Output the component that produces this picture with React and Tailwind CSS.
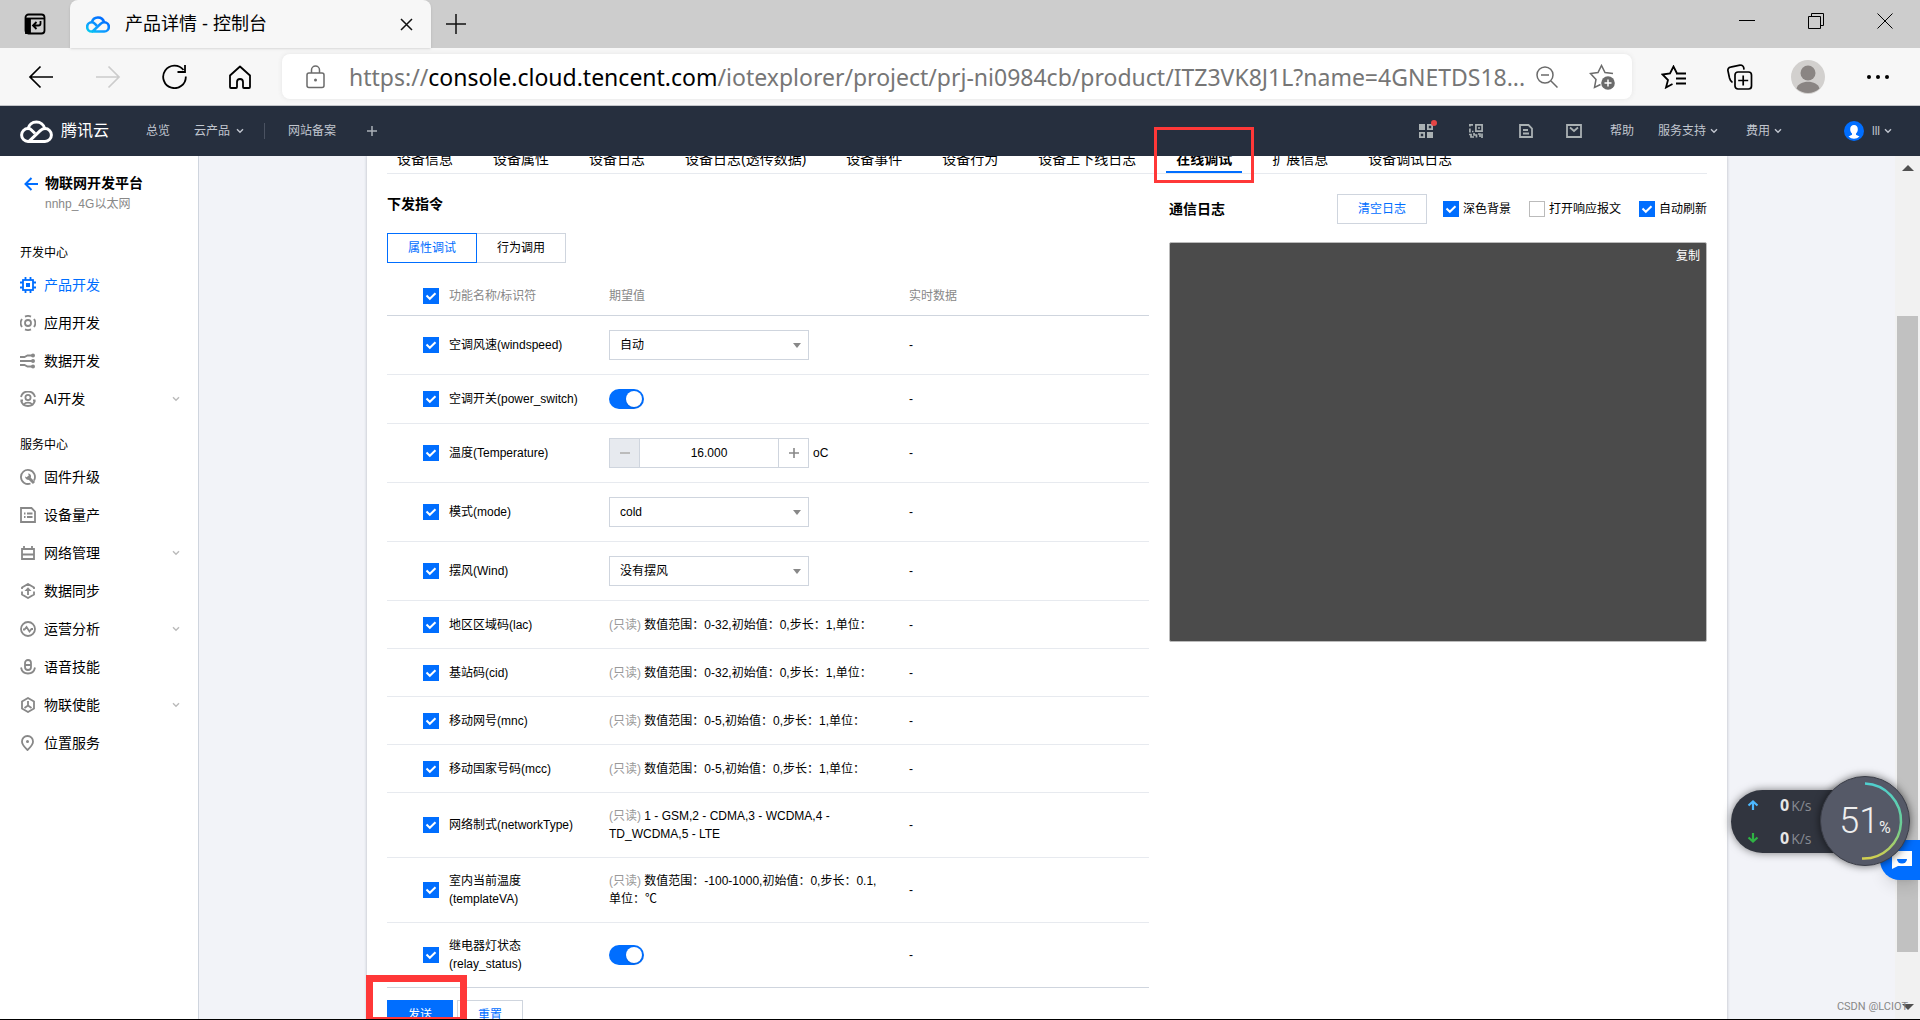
import { useState } from 'react';

const menuDev = [
  { icon: 'chip', label: '产品开发', active: true },
  { icon: 'app', label: '应用开发' },
  { icon: 'data', label: '数据开发' },
  { icon: 'ai', label: 'AI开发', more: true },
];

const menuService = [
  { icon: 'firmware', label: '固件升级' },
  { icon: 'batch', label: '设备量产' },
  { icon: 'network', label: '网络管理', more: true },
  { icon: 'sync', label: '数据同步' },
  { icon: 'analysis', label: '运营分析', more: true },
  { icon: 'voice', label: '语音技能' },
  { icon: 'enable', label: '物联使能', more: true },
  { icon: 'location', label: '位置服务' },
];

const tabs = [
  '设备信息',
  '设备属性',
  '设备日志',
  '设备日志(透传数据)',
  '设备事件',
  '设备行为',
  '设备上下线日志',
  '在线调试',
  '扩展信息',
  '设备调试日志',
];

const rows = [
  { id: 'windspeed', name: '空调风速(windspeed)', type: 'select', options: ['自动', '低速', '高速'] },
  { id: 'power_switch', name: '空调开关(power_switch)', type: 'switch' },
  { id: 'Temperature', name: '温度(Temperature)', type: 'number', unit: 'oC' },
  { id: 'mode', name: '模式(mode)', type: 'select', options: ['cold', 'hot'] },
  { id: 'Wind', name: '摆风(Wind)', type: 'select', options: ['没有摆风', '摆风'] },
  { id: 'lac', name: '地区区域码(lac)', type: 'text', text: '数值范围：0-32,初始值：0,步长：1,单位：' },
  { id: 'cid', name: '基站码(cid)', type: 'text', text: '数值范围：0-32,初始值：0,步长：1,单位：' },
  { id: 'mnc', name: '移动网号(mnc)', type: 'text', text: '数值范围：0-5,初始值：0,步长：1,单位：' },
  { id: 'mcc', name: '移动国家号码(mcc)', type: 'text', text: '数值范围：0-5,初始值：0,步长：1,单位：' },
  { id: 'networkType', name: '网络制式(networkType)', type: 'text', tall: true, text: '1 - GSM,2 - CDMA,3 - WCDMA,4 - TD_WCDMA,5 - LTE' },
  { id: 'templateVA', name: '室内当前温度(templateVA)', type: 'text', tall: true, text: '数值范围：-100-1000,初始值：0,步长：0.1,单位：℃' },
  { id: 'relay_status', name: '继电器灯状态(relay_status)', type: 'switch', tall: true },
];

const rowHeight = (row) => {
  if (row.tall) return 'h-[65px]';
  if (row.type === 'switch') return 'h-[49px]';
  if (row.type === 'text') return 'h-12';
  return 'h-[59px]';
};

const MenuIcon = ({ name }) => {
  const shapes = {
    chip: (
      <>
        <rect x="3" y="3" width="10" height="10" />
        <rect x="6" y="6" width="4" height="4" fill="currentColor" stroke="none" />
        <path d="M5.5 0v3M10.5 0v3M5.5 13v3M10.5 13v3M0 5.5h3M0 10.5h3M13 5.5h3M13 10.5h3" />
      </>
    ),
    app: (
      <>
        <circle cx="8" cy="8" r="3" />
        <path d="M5 1.6a7 7 0 0 1 6 0M5 14.4a7 7 0 0 0 6 0M2 4a7 7 0 0 0 0 8M14 4a7 7 0 0 1 0 8" />
      </>
    ),
    data: (
      <>
        <path d="M0 4h4.500l3-1.500H13M0 8h13M0 12h4.500l3 1.500H13" />
        <g fill="currentColor" stroke="none">
          <circle cx="13" cy="2.500" r="2" />
          <circle cx="13" cy="8" r="2" />
          <circle cx="13" cy="13.500" r="2" />
        </g>
      </>
    ),
    ai: (
      <>
        <circle cx="8" cy="6.500" r="2.600" />
        <path d="M1 6a7.200 7.200 0 0 1 14 0M1 9.500a7.200 7.200 0 0 0 14 0M0.500 9.500H3M13 9.500h2.500M4 13.500c1.500-2.500 6.500-2.500 8 0" />
      </>
    ),
    firmware: (
      <>
        <path d="M10.500 14.500a7 7 0 1 1 3.500-3" />
        <path d="M7.500 7.500l6.500 6.500" strokeWidth="3" />
        <path d="M5 7.500A3.200 3.200 0 0 0 9.500 10.500L11 8A3.200 3.200 0 0 0 8 4.500L9 7 7.500 8.500z" fill="currentColor" stroke="none" />
      </>
    ),
    batch: (
      <>
        <path d="M1 1h10.500L15 4.500V15H1z" />
        <path d="M4 6.500h1.500M7 6.500h5.500M4 10h1.500M7 10h5.500" />
      </>
    ),
    network: <path d="M2 4h12v10H2zM2 9.500h12M4 1v3M12 1v3" />,
    sync: (
      <>
        <path d="M2 6V4.500L8 1l6 3.500V6M2 8.500v3L8 15l6-3.500v-3M8 12V6" />
        <path d="M4.500 8L8 4.200 11.500 8z" fill="currentColor" stroke="none" />
      </>
    ),
    analysis: (
      <>
        <circle cx="8" cy="8" r="7" />
        <path d="M3 8.500h1.500L6.500 6l3 4.500L11.500 8H13" />
      </>
    ),
    voice: (
      <>
        <rect x="5" y="1" width="6" height="10" rx="3" />
        <path d="M5 6h6M1 8.500c1.500 8 12.500 8 14 0" />
      </>
    ),
    enable: (
      <>
        <path d="M8 1l6 3.500v7L8 15l-6-3.500v-7z" />
        <path d="M8 4v4.500M8 8.500L4.500 11M8 8.500l3.500 2.500" />
      </>
    ),
    location: (
      <>
        <path d="M7.500 1a5.500 5.500 0 0 0-5.500 5.800C2 10 5 12.500 7.500 15 10 12.500 13 10 13 6.800A5.500 5.500 0 0 0 7.500 1z" />
        <circle cx="7.500" cy="6.500" r="1.500" fill="currentColor" stroke="none" />
      </>
    ),
  };

  return (
    <svg className="w-4 h-4 shrink-0" viewBox="0 0 16 16" fill="none" stroke="currentColor" strokeWidth="1.8">
      {shapes[name]}
    </svg>
  );
};

const Chevron = ({ className }) => (
  <svg className={className} viewBox="0 0 8 6" fill="none" stroke="currentColor" strokeWidth="1.4">
    <path d="M1 1.200l3 3 3-3" />
  </svg>
);

const CloudLogo = ({ className, stroke, width = 3 }) => (
  <svg className={className} viewBox="0 0 33 24" fill="none" stroke={stroke} strokeWidth={width} strokeLinejoin="round">
    <defs>
      <linearGradient id="cloud" x1="0" y1="24" x2="14" y2="0" gradientUnits="userSpaceOnUse">
        <stop offset="0" stopColor="#00d8e8" />
        <stop offset="0.400" stopColor="#0fa4ff" />
        <stop offset="1" stopColor="#006eff" />
      </linearGradient>
    </defs>
    <path d="M8 22.400h17a6.300 6.300 0 0 0 0-12.800c-2 0-3.500.8-5 2.200L9 22.400" />
    <path d="M15 14.500l-3-3C10.800 10.200 9.500 9.600 8 9.600a6.400 6.400 0 0 0 0 12.800h1.500" />
    <path d="M8 9.800a8.600 8.600 0 0 1 16.800-.1" />
  </svg>
);

const Checkbox = ({ id, label, defaultChecked = true }) => (
  <span className="relative block w-4 h-4 shrink-0">
    <input
      id={id}
      type="checkbox"
      aria-label={label}
      defaultChecked={defaultChecked}
      className="peer block w-4 h-4 appearance-none border border-[#bbb] bg-white checked:border-[#006eff] checked:bg-[#006eff]"
    />
    <svg
      className="absolute inset-0 w-4 h-4 pointer-events-none opacity-0 peer-checked:opacity-100"
      viewBox="0 0 16 16"
      fill="none"
      stroke="#fff"
      strokeWidth="2"
    >
      <path d="M3.500 7.500l3.300 3.300 5.700-5.600" />
    </svg>
  </span>
);

const Switch = ({ label }) => (
  <span className="relative block w-[35px] h-5">
    <input
      type="checkbox"
      role="switch"
      aria-label={label}
      defaultChecked
      className="peer block w-[35px] h-5 appearance-none rounded-full bg-[#bbb] checked:bg-[#006eff]"
    />
    <span className="absolute top-0.5 left-0.5 w-4 h-4 rounded-full bg-white shadow pointer-events-none peer-checked:left-[17px]" />
  </span>
);

const ValueCell = ({ row }) => {
  const [value, setValue] = useState('16.000');
  const step = (delta) => setValue((Number(value) + delta).toFixed(3));

  if (row.type === 'select') {
    return (
      <div className="relative w-[200px]">
        <select
          aria-label={row.name}
          className="block w-full h-[30px] appearance-none border border-[#cfd5de] bg-white px-2.5 text-xs text-black"
        >
          {row.options.map((option) => (
            <option key={option}>{option}</option>
          ))}
        </select>
        <svg className="absolute right-2 top-3 w-2 h-2 pointer-events-none" viewBox="0 0 8 8" fill="#888">
          <path d="M0 1h8L4 6z" />
        </svg>
      </div>
    );
  }
  if (row.type === 'switch') {
    return <Switch label={row.name} />;
  }
  if (row.type === 'number') {
    return (
      <div className="flex items-center gap-1">
        <div className="flex w-[200px] h-[30px] border border-[#cfd5de]">
          <button
            type="button"
            aria-label="减少"
            onClick={() => step(-1)}
            className="flex items-center justify-center w-[30px] border-r border-[#cfd5de] bg-[#e7eaef]"
          >
            <span className="w-2.5 h-0.5 bg-[#bbb]" />
          </button>
          <input
            aria-label={row.name}
            value={value}
            onChange={(e) => setValue(e.target.value)}
            className="flex-1 min-w-0 text-center text-xs"
          />
          <button
            type="button"
            aria-label="增加"
            onClick={() => step(1)}
            className="flex items-center justify-center w-[30px] border-l border-[#cfd5de]"
          >
            <svg className="w-2.5 h-2.5" viewBox="0 0 10 10" stroke="#888" strokeWidth="1.600">
              <path d="M5 0v10M0 5h10" />
            </svg>
          </button>
        </div>
        <span>{row.unit}</span>
      </div>
    );
  }
  return (
    <div>
      <span className="text-[#999]">(只读)</span> {row.text}
    </div>
  );
};

const BrowserBar = () => (
  <div className="shrink-0 bg-[#f7f7f7] border-b border-[#c3c5c9]">
    {/* Tab strip */}
    <div className="flex h-12 bg-[#cdcdcd]">
      <button type="button" aria-label="标签页操作" className="flex items-center justify-center w-[70px]">
        <svg className="w-[22px] h-[22px]" viewBox="0 0 22 22" fill="none" stroke="#000" strokeWidth="1.800">
          <rect x="1.500" y="1.500" width="19" height="19" rx="3" />
          <path d="M2 5.500h18" />
          <path d="M2 6h4v14H2z" fill="#000" />
          <path d="M16.500 8v2.500a2 2 0 0 1-2 2H9.500M12.500 9l-3.500 3.500 3.500 3.500" />
        </svg>
      </button>
      <div className="flex items-center w-[361px] rounded-t-lg bg-[#f7f7f7] pl-4 pr-[18px] shadow-sm">
        <CloudLogo className="w-6 h-[18px]" stroke="url(#cloud)" width={3.6} />
        <span className="ml-[15px] flex-1 text-lg leading-6 text-black">产品详情 - 控制台</span>
        <button type="button" aria-label="关闭标签页">
          <svg className="w-[13px] h-[13px]" viewBox="0 0 13 13" stroke="#111" strokeWidth="1.500">
            <path d="M1 1l11 11M12 1L1 12" />
          </svg>
        </button>
      </div>
      <button type="button" aria-label="新标签页" className="ml-[15px]">
        <svg className="w-5 h-5" viewBox="0 0 20 20" stroke="#111" strokeWidth="1.500">
          <path d="M10 0v20M0 10h20" />
        </svg>
      </button>
      <div className="ml-auto flex items-center gap-[53px] pr-[27px] pb-1.5">
        <button type="button" aria-label="最小化">
          <svg className="w-4 h-4" viewBox="0 0 16 16" stroke="#000">
            <path d="M0 7.500h16" />
          </svg>
        </button>
        <button type="button" aria-label="还原">
          <svg className="w-4 h-4" viewBox="0 0 16 16" fill="none" stroke="#000">
            <path d="M.5 3.500h12v12H.5zM3.500 3.500v-3h12v12h-3" />
          </svg>
        </button>
        <button type="button" aria-label="关闭">
          <svg className="w-4 h-4" viewBox="0 0 16 16" stroke="#000">
            <path d="M.5.5l15 15M15.500.5l-15 15" />
          </svg>
        </button>
      </div>
    </div>

    {/* Toolbar */}
    <div className="flex items-center h-[57px] pl-7 pr-[31px]">
      <div className="flex items-center gap-[41px]">
        <button type="button" aria-label="后退">
          <svg className="w-[26px] h-6" viewBox="0 0 26 24" fill="none" stroke="#000" strokeWidth="1.700">
            <path d="M12.500 1.500L2 12l10.500 10.500M2 12h23" />
          </svg>
        </button>
        <button type="button" aria-label="前进">
          <svg className="w-[26px] h-6" viewBox="0 0 26 24" fill="none" stroke="#ccc" strokeWidth="1.700">
            <path d="M13.500 1.500L24 12 13.500 22.500M24 12H1" />
          </svg>
        </button>
        <button type="button" aria-label="刷新">
          <svg className="w-[25px] h-[25px]" viewBox="0 0 25 25" fill="none" stroke="#000" strokeWidth="1.800">
            <path d="M21.500 6A11.300 11.300 0 1 0 23.800 12.500M23 1v7h-7.500" />
          </svg>
        </button>
        <button type="button" aria-label="主页">
          <svg className="w-6 h-6" viewBox="0 0 24 24" fill="none" stroke="#000" strokeWidth="1.800" strokeLinejoin="round">
            <path d="M12 1.500L2 10.500V22a1 1 0 0 0 1 1h5a1 1 0 0 0 1-1v-5a3 3 0 0 1 6 0v5a1 1 0 0 0 1 1h5a1 1 0 0 0 1-1V10.500z" />
          </svg>
        </button>
      </div>
      <div className="ml-[30px] flex flex-1 min-w-0 items-center h-[45px] rounded-lg bg-white pl-6 pr-[17px] shadow-[0_0_5px_#e4e4e4]">
        <svg className="w-[19px] h-6 shrink-0" viewBox="0 0 19 24" fill="none" stroke="#6b6b6b" strokeWidth="1.500">
          <rect x="1" y="8" width="17" height="14.500" rx="2" />
          <path d="M5.500 8V5a4 4 0 0 1 8 0v3" />
          <circle cx="9.500" cy="15" r="1.500" fill="#6b6b6b" stroke="none" />
        </svg>
        <div
          role="textbox"
          aria-label="地址栏"
          className="ml-6 flex-1 min-w-0 whitespace-nowrap overflow-hidden font-['Noto_Sans','Noto_Sans_CJK_SC',sans-serif] text-[23px] leading-8 text-[#767676]"
        >
          https://<span className="text-black">console.cloud.tencent.com</span>
          /iotexplorer/project/prj-ni0984cb/product/ITZ3VK8J1L?name=4GNETDS18...
        </div>
        <button type="button" aria-label="缩小">
          <svg className="w-[22px] h-[22px]" viewBox="0 0 22 22" fill="none" stroke="#6b6b6b" strokeWidth="1.500">
            <circle cx="9" cy="9" r="8" />
            <path d="M5 9h8M15 15l6.500 6.500" />
          </svg>
        </button>
        <button type="button" aria-label="添加到收藏夹" className="ml-[31px]">
          <svg className="w-[26px] h-[26px]" viewBox="0 0 26 26" fill="none" stroke="#6b6b6b" strokeWidth="1.500">
            <path d="M24 9.500l-8-1L12.500 1.500 9 8.500l-7.500 1L7 15.500 5.500 23.500l6-3" />
            <circle cx="19" cy="19" r="6.800" fill="#6b6b6b" stroke="none" />
            <path d="M19 15.500v7M15.500 19h7" stroke="#fff" />
          </svg>
        </button>
      </div>
      <button type="button" aria-label="收藏夹" className="ml-[29px]">
        <svg className="w-[26px] h-6" viewBox="0 0 26 24" fill="none" stroke="#000" strokeWidth="1.800">
          <path d="M18 8.500h-2L12.500 1.500 9 8.500l-7.500 1L7 15 5 22.500l6.500-3.500M15 8.500h10M15 13.500h10M15 18.500h10" />
        </svg>
      </button>
      <button type="button" aria-label="集锦" className="ml-10">
        <svg className="w-[26px] h-[26px]" viewBox="0 0 26 26" fill="none" stroke="#000" strokeWidth="1.700">
          <path d="M5.500 18.500C3.500 17.500 3 16 2.500 14L1 7a3 3 0 0 1 2.500-3.800L13 1.200a3 3 0 0 1 3.700 2.500l.3 2" />
          <rect x="8" y="8" width="16.500" height="17" rx="3" />
          <path d="M16.200 11.500v10M11.200 16.500h10" />
        </svg>
      </button>
      <button type="button" aria-label="个人资料" className="ml-[38px]">
        <svg className="w-[34px] h-[34px]" viewBox="0 0 34 34">
          <circle cx="17" cy="17" r="17" fill="#d2d0ce" />
          <circle cx="17" cy="13" r="7.500" fill="#8a8583" />
          <path d="M5.500 28.500c2-9 21-9 23 0a17 17 0 0 1-23 0z" fill="#8a8583" />
        </svg>
      </button>
      <button type="button" aria-label="更多" className="ml-[42px]">
        <svg className="w-[22px] h-4" viewBox="0 0 22 16">
          <circle cx="2" cy="8" r="2" />
          <circle cx="11" cy="8" r="2" />
          <circle cx="20" cy="8" r="2" />
        </svg>
      </button>
    </div>
  </div>
);

const ConsoleHeader = () => (
  <header className="flex items-center shrink-0 h-[50px] bg-[#262f3e] pl-5 pr-7 text-xs leading-5 text-[#c1c6cf]">
    <CloudLogo className="w-[33px] h-6" stroke="#fff" />
    <span className="ml-2 text-base leading-6 text-white">腾讯云</span>
    <a href="#" className="ml-[37px]">总览</a>
    <a href="#" className="ml-6 flex items-center">
      云产品
      <Chevron className="ml-1.5 w-2 h-1.5" />
    </a>
    <span className="ml-5 w-px h-4 bg-[#4a5261]" />
    <a href="#" className="ml-[23px]">网站备案</a>
    <button type="button" aria-label="添加" className="ml-[31px]">
      <svg className="w-2.5 h-2.5" viewBox="0 0 10 10" stroke="#aab1b8" strokeWidth="1.500">
        <path d="M5 0v10M0 5h10" />
      </svg>
    </button>

    <div className="ml-auto flex items-center">
      <a href="#" aria-label="控制台" className="relative">
        <svg className="w-3.5 h-3.5" viewBox="0 0 14 14" fill="none" stroke="#aab1b3" strokeWidth="1.800">
          <path d="M0 0h6v6H0zM8 8h6v6H8z" fill="#aab1b3" stroke="none" />
          <path d="M8.900.9h4.200v4.200H8.900zM.9 8.900h4.200v4.200H.9z" />
        </svg>
        <span className="absolute -top-1 -right-1 w-1.5 h-1.5 rounded-full bg-[#e54545]" />
      </a>
      <a href="#" aria-label="小程序" className="ml-9">
        <svg className="w-3.5 h-3.5" viewBox="0 0 14 14" fill="none" stroke="#aab1b3" strokeWidth="1.700">
          <path d="M4 .9H.9v1.600M.9 4.500v4M3 7.500h1.500M6.900.9h6.200v6.200H6.900zM9 4h2M0 10.500h2v2.500h3M5 9v2h2.500v2.500M9 10h2v3M13 9.500V14" />
        </svg>
      </a>
      <a href="#" aria-label="文档" className="ml-9">
        <svg className="w-3.5 h-3.5" viewBox="0 0 14 14" fill="none" stroke="#aab1b3" strokeWidth="1.800">
          <path d="M1 1h8.500L13 4.500V13H1zM4 6h5M4 9.500h6" />
        </svg>
      </a>
      <a href="#" aria-label="消息" className="ml-[33px]">
        <svg className="w-4 h-3.5" viewBox="0 0 16 14" fill="none" stroke="#aab1b3" strokeWidth="1.800">
          <path d="M1 1h14v12H1zM4 3.500l4 3.500 4-3.500" />
        </svg>
      </a>
      <a href="#" className="ml-7">帮助</a>
      <a href="#" className="ml-6 flex items-center">
        服务支持
        <Chevron className="ml-1 w-2 h-1.5" />
      </a>
      <a href="#" className="ml-7 flex items-center">
        费用
        <Chevron className="ml-1 w-2 h-1.5" />
      </a>
      <a href="#" className="ml-[62px] flex items-center">
        <svg className="w-5 h-5" viewBox="0 0 20 20">
          <circle cx="10" cy="10" r="10" fill="#006eff" />
          <path d="M10 4c2.500 0 3.800 1.800 3.800 4.200 0 2-.8 3.500-1.800 4.300v1.300l3.500 1.700a8 8 0 0 1-11 0L8 13.800v-1.300c-1-.8-1.800-2.300-1.800-4.300C6.200 5.800 7.500 4 10 4z" fill="#fff" />
        </svg>
        <span className="ml-2">lll</span>
        <Chevron className="ml-1 w-2 h-1.5" />
      </a>
    </div>
  </header>
);

const MenuGroup = ({ title, items }) => (
  <div>
    <h3 className="h-[26px] text-xs leading-[26px] text-black">{title}</h3>
    {items.map((item) => (
      <a
        key={item.label}
        href="#"
        className={`flex items-center h-[38px] ${item.active ? 'text-[#006eff]' : 'text-[#888]'}`}
      >
        <MenuIcon name={item.icon} />
        <span className={`ml-2 flex-1 text-sm ${item.active ? 'text-[#006eff]' : 'text-black'}`}>{item.label}</span>
        {item.more && <Chevron className="w-2 h-1.5 text-[#bbb]" />}
      </a>
    ))}
  </div>
);

const Sidebar = () => (
  <aside className="w-[199px] shrink-0 border-r border-[#cfd5de] bg-white pl-5 pr-[18px]">
    <div className="flex gap-[7px] pt-[17px] pl-1">
      <svg className="mt-1 w-3.5 h-3.5" viewBox="0 0 14 14" fill="none" stroke="#006eff" strokeWidth="2">
        <path d="M7.500 1L1.500 7l6 6M1.500 7H14" />
      </svg>
      <div>
        <h2 className="text-sm leading-5 font-bold text-black">物联网开发平台</h2>
        <p className="mt-px text-xs leading-5 text-[#888]">nnhp_4G以太网</p>
      </div>
    </div>
    <nav className="mt-[26px] flex flex-col gap-3.5">
      <MenuGroup title="开发中心" items={menuDev} />
      <MenuGroup title="服务中心" items={menuService} />
    </nav>
  </aside>
);

const CommandPanel = () => (
  <section className="flex-1 min-w-0">
    <h2 className="mt-5 text-sm leading-5 font-bold text-black">下发指令</h2>
    <div className="mt-[19px] flex text-xs">
      <button type="button" className="relative w-[90px] h-[30px] border border-[#006eff] text-[#006eff]">属性调试</button>
      <button type="button" className="-ml-px w-[90px] h-[30px] border border-[#cfd5de] text-black">行为调用</button>
    </div>
    <table className="mt-[13px] w-full table-fixed border-separate border-spacing-0 text-left text-xs leading-[18px] text-black">
      <colgroup>
        <col className="w-[52px]" />
        <col className="w-40" />
        <col className="w-[300px]" />
        <col />
      </colgroup>
      <thead>
        <tr className="[&>th]:h-10 [&>th]:border-b [&>th]:border-[#cfd5de] [&>th]:font-normal [&>th]:text-[#888]">
          <th className="pl-9">
            <Checkbox label="全选" />
          </th>
          <th className="px-2.5">功能名称/标识符</th>
          <th className="px-2.5">期望值</th>
          <th className="px-2.5">实时数据</th>
        </tr>
      </thead>
      <tbody>
        {rows.map((row) => (
          <tr
            key={row.id}
            className="[&>td]:border-b [&>td]:border-[#e7eaef] last:[&>td]:border-[#cfd5de]"
          >
            <td className={`pl-9 ${rowHeight(row)}`}>
              <Checkbox id={`check-${row.id}`} />
            </td>
            <td className="px-2.5">
              <label htmlFor={`check-${row.id}`}>{row.name}</label>
            </td>
            <td className="pl-2.5 pr-5">
              <ValueCell row={row} />
            </td>
            <td className="px-2.5">-</td>
          </tr>
        ))}
      </tbody>
    </table>
    <div className="relative mt-3 flex gap-1 text-xs">
      <button type="button" className="w-[66px] h-[30px] bg-[#006eff] text-white">发送</button>
      <button type="button" className="w-[66px] h-[30px] border border-[#cfd5de] text-[#006eff]">重置</button>
      <div className="absolute -top-[25px] -left-[21px] w-[101px] h-[49px] border-[7px] border-[#ff3838] pointer-events-none" />
    </div>
  </section>
);

const LogPanel = () => (
  <section className="w-[538px] shrink-0">
    <div className="mt-5 flex items-center h-[30px] text-xs">
      <h2 className="flex-1 text-sm leading-5 font-bold text-black">通信日志</h2>
      <button type="button" className="w-[90px] h-[30px] border border-[#cfd5de] text-[#006eff]">清空日志</button>
      <div className="ml-4 flex gap-[18px] text-black">
        <label className="flex items-center gap-1">
          <Checkbox />
          深色背景
        </label>
        <label className="flex items-center gap-1">
          <Checkbox defaultChecked={false} />
          打开响应报文
        </label>
        <label className="flex items-center gap-1">
          <Checkbox />
          自动刷新
        </label>
      </div>
    </div>
    <div className="mt-[18px] h-[400px] rounded-xs border border-[#bbb] bg-[#4b4b4b] px-1.5 text-right">
      <button type="button" className="text-xs leading-5 text-white">复制</button>
    </div>
  </section>
);

const SpeedWidget = () => (
  <div className="absolute right-[10px] bottom-[153px] flex items-center">
    <div className="-mr-[45px] flex flex-col justify-center gap-[15px] w-[134px] h-[63px] rounded-l-full bg-[#31353f] pl-4 font-['Open_Sans',sans-serif] shadow-[0_0_8px_rgba(0,0,0,0.5)]">
      {['#4db8ff', '#2fb344'].map((color, i) => (
        <div key={color} className="flex items-center h-[18px] leading-[18px]">
          <svg className="w-3 h-2.5" viewBox="0 0 12 10" fill="none" stroke={color} strokeWidth="2.200">
            <path d={i === 0 ? 'M6 10V2M1.500 5.500L6 1.500l4.500 4' : 'M6 0v8M1.500 4.500L6 8.500l4.500-4'} />
          </svg>
          <span className="ml-[21px] text-base leading-[18px] font-bold text-[#e6e6e6]">0</span>
          <span className="ml-0.5 mt-0.5 text-sm leading-[18px] text-[#878a92]">K/s</span>
        </div>
      ))}
    </div>
    <div className="relative w-[90px] h-[90px] rounded-full border border-[#3b3e48] bg-[#555967] shadow-[0_0_8px_rgba(0,0,0,0.6)]">
      <svg className="absolute inset-0" viewBox="0 0 88 88" fill="none">
        <defs>
          <linearGradient id="ring" x1="0" y1="0" x2="0" y2="1">
            <stop offset="0" stopColor="#4fd0cf" />
            <stop offset="0.600" stopColor="#6fce8f" />
            <stop offset="1" stopColor="#d2cf4f" />
          </linearGradient>
        </defs>
        <path d="M44 6.500a37.500 37.500 0 0 1-3 75" stroke="url(#ring)" strokeWidth="2.500" />
      </svg>
      <div className="flex items-baseline justify-center h-full font-['Roboto',sans-serif] font-light text-[#eee]">
        <span className="text-4xl leading-[88px]">51</span>
        <span className="text-base font-normal">%</span>
      </div>
    </div>
  </div>
);

const PageScrollbar = () => (
  <div className="flex flex-col items-center w-[25px] shrink-0 bg-[#f1f1f1] py-2">
    <svg className="w-3 h-2" viewBox="0 0 12 8" fill="#505050">
      <path d="M6 1l6 6H0z" />
    </svg>
    <div className="flex-[144]" />
    <div className="flex-[635] w-[21px] bg-[#c1c1c1]" />
    <div className="flex-[51]" />
    <svg className="w-3 h-2" viewBox="0 0 12 8" fill="#505050">
      <path d="M6 7L0 1h12z" />
    </svg>
  </div>
);

export default function App() {
  return (
    <div className="relative flex flex-col h-screen overflow-hidden border-b border-black bg-[#f2f3f8] font-['Liberation_Sans','Noto_Sans_CJK_SC',sans-serif]">
      <BrowserBar />
      <ConsoleHeader />
      <div className="flex flex-1 min-h-0 overflow-hidden">
        <Sidebar />
        <main className="flex-1 min-w-0">
          <div className="mx-auto max-w-[1360px] min-h-full bg-white px-5 shadow-[0_0_3px_rgba(54,58,80,0.32)]">
            <div className="flex gap-5 h-[18px] overflow-hidden border-b border-[#e7eaef] text-sm text-black">
              {tabs.map((tab) => (
                <a
                  key={tab}
                  href="#"
                  className={`-mt-3 h-[30px] shrink-0 px-2.5 leading-[30px] whitespace-nowrap ${
                    tab === '在线调试' ? 'font-bold shadow-[inset_0_-3px_#006eff]' : ''
                  }`}
                >
                  {tab}
                </a>
              ))}
            </div>
            <div className="flex gap-5">
              <CommandPanel />
              <LogPanel />
            </div>
          </div>
        </main>
        <PageScrollbar />
      </div>

      {/* Floating layers */}
      <div className="absolute top-[127px] left-[1154px] w-[100px] h-14 border-[3px] border-[#ff3838] pointer-events-none" />
      <button
        type="button"
        aria-label="在线客服"
        className="absolute right-0 bottom-[139px] flex items-center w-10 h-10 rounded-l-full bg-[#006eff] pl-3 shadow-lg"
      >
        <svg className="w-5 h-[18px]" viewBox="0 0 20 18">
          <path d="M0 0h20v15H6l-6 3z" fill="#fff" />
          <path d="M5 8h10a5 4.500 0 0 1-10 0z" fill="#006eff" />
        </svg>
      </button>
      <SpeedWidget />
      <span className="absolute right-3 bottom-1 font-['Roboto',sans-serif] text-[11px] leading-4 text-[#888]">CSDN @LCIOT</span>
    </div>
  );
}
